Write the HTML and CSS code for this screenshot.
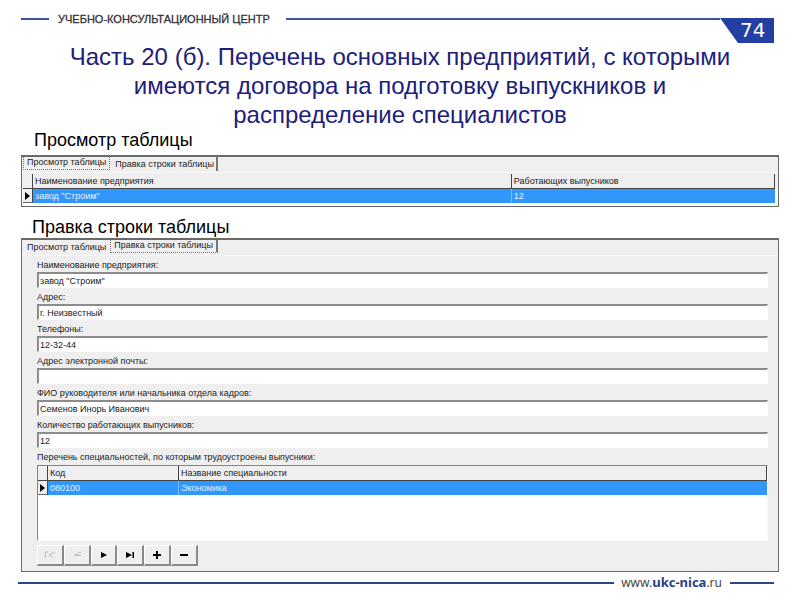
FILE: index.html
```html
<!DOCTYPE html>
<html lang="ru">
<head>
<meta charset="utf-8">
<title>Учебно-консультационный центр</title>
<link rel="stylesheet" href="styles.css">
</head>
<body>
<header class="top">
  <span class="rule rule-start"></span>
  <span class="brand">УЧЕБНО-КОНСУЛЬТАЦИОННЫЙ ЦЕНТР</span>
  <span class="rule rule-grow"></span>
  <span class="page-number">74</span>
</header>
<main>
  <h1>Часть 20 (б). Перечень основных предприятий, с которыми имеются договора на подготовку выпускников и распределение специалистов</h1>

  <h2 class="caption-view">Просмотр таблицы</h2>
  <section class="panel">
    <div class="tabs">
      <button class="tab active" type="button">Просмотр таблицы</button>
      <button class="tab" type="button">Правка строки таблицы</button>
    </div>
    <div class="sheet">
      <table class="grid">
        <colgroup><col class="mark"><col><col class="graduates"></colgroup>
        <thead><tr><th></th><th>Наименование предприятия</th><th>Работающих выпусников</th></tr></thead>
        <tbody><tr><td><svg class="pointer" viewBox="0 0 5 8"><path d="M0 0L5 4L0 8Z"/></svg></td><td>завод "Строим"</td><td>12</td></tr></tbody>
      </table>
    </div>
  </section>

  <h2 class="caption-edit">Правка строки таблицы</h2>
  <section class="panel">
    <div class="tabs">
      <button class="tab" type="button">Просмотр таблицы</button>
      <button class="tab active" type="button">Правка строки таблицы</button>
    </div>
    <form class="form">
      <label for="name">Наименование предприятия:</label>
      <input id="name" type="text" value='завод "Строим"'>
      <label for="address">Адрес:</label>
      <input id="address" type="text" value="г. Неизвестный">
      <label for="phones">Телефоны:</label>
      <input id="phones" type="text" value="12-32-44">
      <label for="email">Адрес электронной почты:</label>
      <input id="email" type="text" value="">
      <label for="head">ФИО руководителя или начальника отдела кадров:</label>
      <input id="head" type="text" value="Семенов Инорь Иванович">
      <label for="count">Количество работающих выпусников:</label>
      <input id="count" type="text" value="12">
      <div class="list-label" id="list-label">Перечень специальностей, по которым трудоустроены выпусники:</div>
      <div class="list">
        <table class="grid" aria-labelledby="list-label">
          <colgroup><col class="mark"><col class="code"><col></colgroup>
          <thead><tr><th></th><th>Код</th><th>Название специальности</th></tr></thead>
          <tbody><tr><td><svg class="pointer" viewBox="0 0 5 8"><path d="M0 0L5 4L0 8Z"/></svg></td><td>080100</td><td>Экономика</td></tr></tbody>
        </table>
      </div>
      <div class="navigator">
        <button type="button" disabled aria-label="Первая"><svg viewBox="0 0 12 8"><path class="line" d="M1.500 7V1H4M11 1L5 4L9 6.500"/></svg></button>
        <button type="button" disabled aria-label="Предыдущая"><svg viewBox="0 0 12 8"><path class="line" d="M10 1L3 4.500H10"/></svg></button>
        <button type="button" aria-label="Следующая"><svg viewBox="0 0 12 8"><path d="M3 1L9 4L3 7Z"/></svg></button>
        <button type="button" aria-label="Последняя"><svg viewBox="0 0 12 8"><path d="M2 1L8 4L2 7ZM8.500 1H10V7H8.500Z"/></svg></button>
        <button type="button" aria-label="Добавить"><svg viewBox="0 0 12 8"><path d="M5 0H7V3H10V5H7V8H5V5H2V3H5Z"/></svg></button>
        <button type="button" aria-label="Удалить"><svg viewBox="0 0 12 8"><path d="M2 3H10V5H2Z"/></svg></button>
      </div>
    </form>
  </section>
</main>
<footer class="bottom">
  <span class="rule rule-grow"></span>
  <a class="site" href="#">www.<b>ukc-nica</b>.ru</a>
  <span class="rule rule-end"></span>
</footer>
</body>
</html>
```
FILE: styles.css
```css
* {
  box-sizing: border-box;
}

body {
  margin: 0;
  background: #fff;
  color: #000;
  font-family: "Liberation Sans", Arial, sans-serif;
}

.top {
  display: flex;
  align-items: flex-start;
  height: 42px;
  padding: 18px 26px 0 21px;
}

.rule {
  height: 2px;
  background: #3c529c;
}

.rule-start {
  width: 28px;
}

.rule-grow {
  flex: 1;
}

.rule-end {
  width: 44px;
}

.brand {
  margin: -6px 16px 0 9px;
  color: #333;
  font-size: 11px;
  line-height: 14px;
  -webkit-text-stroke: 0.3px #333;
}

.page-number {
  width: 54px;
  height: 25px;
  padding-left: 20px;
  background: #233fa5;
  clip-path: polygon(0 0, 100% 0, 100% 100%, 18px 100%);
  color: #fff;
  font-family: "DejaVu Sans", Verdana, sans-serif;
  font-size: 20px;
  line-height: 24px;
}

main {
  padding: 0 21px;
}

h1 {
  margin: 0;
  padding: 0 40px;
  color: #20207c;
  font-size: 24px;
  font-weight: 400;
  line-height: 29px;
  text-align: center;
}

h2 {
  margin: 0;
  font-size: 18px;
  font-weight: 400;
  line-height: 20px;
}

.caption-view {
  padding: 1px 0 5px 13px;
}

.caption-edit {
  padding: 10px 0 1px 11px;
}

.panel {
  border: 1px solid #696969;
  border-top-width: 2px;
  background: #efefef;
  font-size: 9px;
}

.tabs {
  display: flex;
  gap: 1px;
  height: 15px;
  padding-left: 1px;
}

.tab {
  height: 14px;
  padding: 0 2px 0 4px;
  border: 0;
  border-right: 1px solid #efefef;
  background: none;
  color: #222;
  font: inherit;
  line-height: 11px;
}

.tab.active {
  height: 13px;
  padding: 0 3px 1px 3px;
  border: 1px dotted #777;
  border-top: 0;
}

.tab:last-child {
  border-right: 2px solid #777;
}

.sheet {
  padding: 1px 3px 3px 1px;
  border-top: 1px solid #fafafa;
  background: linear-gradient(#efefef 50%, #fff 50%);
}

.grid {
  width: 100%;
  border-collapse: separate;
  border-spacing: 0;
  table-layout: fixed;
}

.mark {
  width: 10px;
}

.graduates {
  width: 35%;
}

.code {
  width: 131px;
}

th,
td {
  height: 15px;
  padding: 0 2px;
  font-weight: 400;
  line-height: 13px;
  text-align: left;
  white-space: nowrap;
}

th {
  border-right: 1px solid #444;
  border-bottom: 1px solid #444;
  background: #efefef;
  color: #222;
}

td {
  height: 14px;
  border-right: 1px solid #7cbcfb;
  background: #3297fb;
  color: #e4f1ff;
}

td:last-child {
  border-right: 0;
}

td:first-child {
  padding: 0 0 0 2px;
  border-right: 1px solid #444;
  border-bottom: 1px solid #666;
  background: #efefef;
}

.pointer {
  display: block;
  width: 5px;
  height: 8px;
  fill: #000;
}

.form {
  padding: 4px 10px 5px 15px;
  border-top: 1px solid #f8f8f8;
}

.form label,
.list-label {
  display: block;
  height: 11px;
  color: #222;
  line-height: 11px;
}

.form input {
  display: block;
  width: 100%;
  height: 16px;
  margin: 1px 0 4px;
  padding: 0 1px;
  border: 1px solid #fff;
  border-top: 2px solid #8c8c8c;
  border-left: 2px solid #8c8c8c;
  border-radius: 0;
  outline: 0;
  background: #fff;
  color: #222;
  font: inherit;
}

.list {
  height: 76px;
  margin-top: 2px;
  border: 1px solid #f8f8f8;
  border-top-color: #858585;
  border-left-color: #858585;
  background: #fff;
}

.navigator {
  display: flex;
  width: 161px;
  margin-top: 4px;
}

.navigator button {
  display: flex;
  flex: 1;
  align-items: center;
  justify-content: center;
  height: 21px;
  padding: 0;
  border: 1px solid #fff;
  border-right: 2px solid #8a8a8a;
  border-bottom: 2px solid #8a8a8a;
  background: #efefef;
}

.navigator svg {
  width: 12px;
  height: 8px;
  fill: #000;
}

.navigator .line {
  fill: none;
  stroke: #bbb;
}

.bottom {
  display: flex;
  align-items: center;
  padding: 2px 26px 0 18px;
}

.bottom .rule {
  background: #2c458f;
}

.site {
  margin: 0 8px 0 7px;
  color: #444;
  font-family: "Noto Sans", sans-serif;
  font-size: 12px;
  line-height: 16px;
  text-decoration: none;
}

.site b {
  color: #2a3f88;
  font-size: 13px;
}
```
